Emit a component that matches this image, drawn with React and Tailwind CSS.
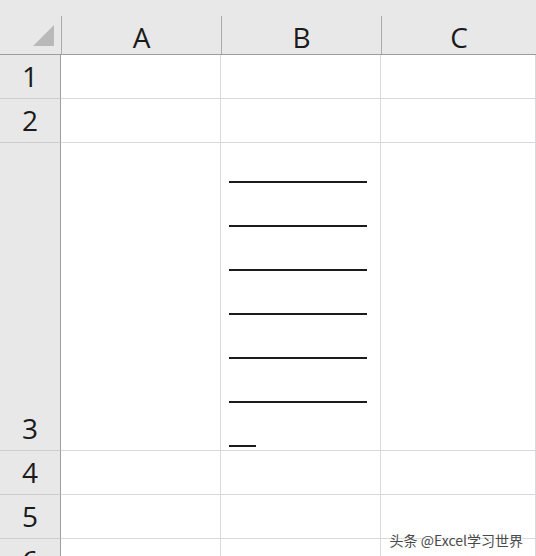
const cols = ['A', 'B', 'C'];

const rows = [
  { n: 1, h: 'h-[44px]' },
  { n: 2, h: 'h-[44px]' },
  { n: 3, h: 'h-[308px]', lines: true },
  { n: 4, h: 'h-[44px]' },
  { n: 5, h: 'h-[44px]' },
  { n: 6, h: 'h-[44px]' },
];

const colW = ['w-[160px]', 'w-[160px]', 'flex-1'];

const UnderlineBlock = () => (
  <div className="flex flex-col gap-[42px] pl-[8px] pt-[38px]">
    {[0, 1, 2, 3, 4, 5].map((i) => (
      <div key={i} className="h-[2px] w-[138px] bg-[#1a1a1a]" />
    ))}
    <div className="h-[2px] w-[27px] bg-[#1a1a1a]" />
  </div>
);

export default function App() {
  return (
    <div
      className="relative h-[556px] w-[536px] overflow-hidden bg-white text-[#1b1b1b]"
      style={{ fontFamily: '"Open Sans", "Noto Sans", sans-serif' }}
    >
      {/* column header */}
      <div className="flex h-[55px] border-b border-[#9d9d9d] bg-[#e8e8e8]">
        <div className="flex w-[61px] shrink-0 items-end justify-end pb-[8px] pr-[7px]">
          <div
            className="h-[21px] w-[21px] bg-[#b9b9b9]"
            style={{ clipPath: 'polygon(100% 0, 100% 100%, 0 100%)' }}
          />
        </div>
        {cols.map((c, i) => (
          <div key={c} className={`${colW[i]} flex flex-col shrink-0`}>
            <div className="flex flex-1 items-end">
              <div className="h-[38px] w-px bg-[#ababab]" />
              <div className="flex flex-1 items-end justify-center pb-[3px] text-[28px] leading-none">
                {c}
              </div>
            </div>
          </div>
        ))}
      </div>

      {rows.map((r) => (
        <div key={r.n} className={`flex ${r.h}`}>
          <div className="flex w-[61px] shrink-0 items-end justify-center border-r border-b border-r-[#9d9d9d] border-b-[#cdcdcd] bg-[#e8e8e8] pb-[8px] text-[28px] leading-none">
            {r.n}
          </div>
          {cols.map((c, i) => (
            <div
              key={c}
              className={`${colW[i]} shrink-0 border-b border-r border-[#d8d9dc]`}
            >
              {r.lines && c === 'B' ? <UnderlineBlock /> : null}
            </div>
          ))}
        </div>
      ))}

      <div
        className="absolute bottom-[9px] right-[13px] text-[14px] leading-none text-[#4a4a4a]"
        style={{
          fontFamily: '"Noto Sans CJK SC", "Noto Sans", sans-serif',
          textShadow: '0 0 2px #fff, 0 0 2px #fff',
        }}
      >
        头条 @Excel学习世界
      </div>
    </div>
  );
}
